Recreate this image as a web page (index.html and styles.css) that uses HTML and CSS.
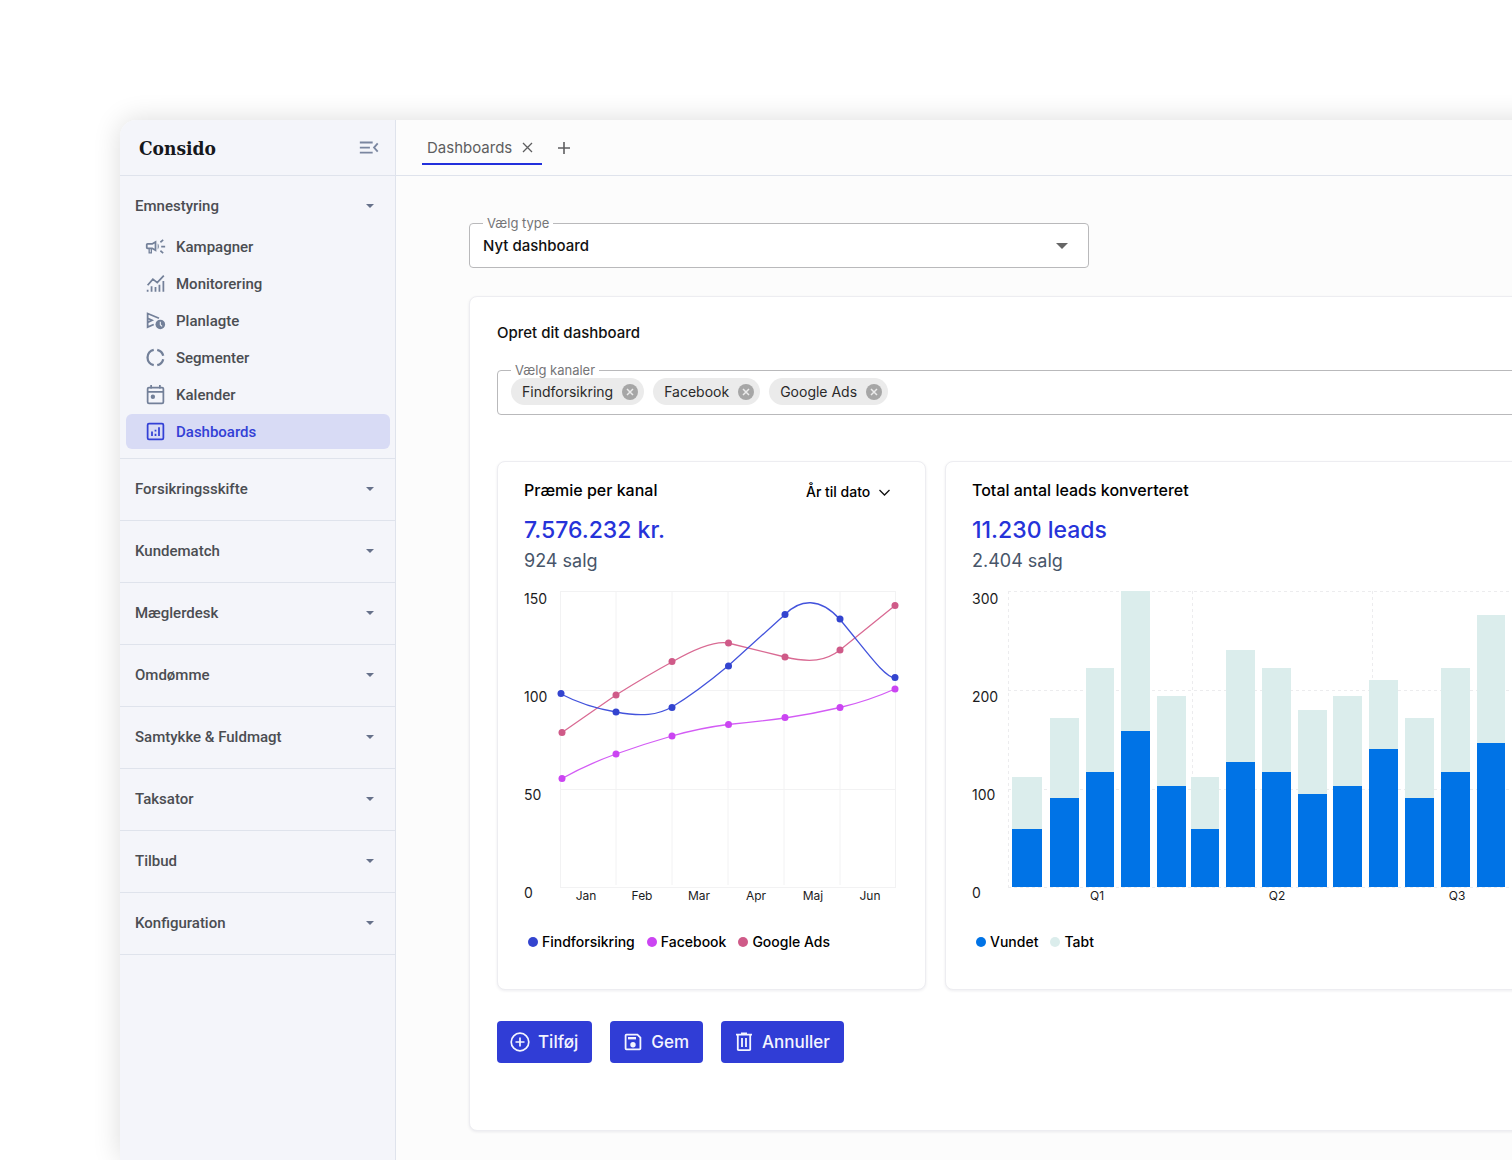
FILE: index.html
```html
<!DOCTYPE html>
<html lang="da">
<head>
<meta charset="utf-8">
<meta name="viewport" content="width=device-width, initial-scale=1">
<title>Consido – Dashboards</title>
<link rel="stylesheet" href="styles.css">
</head>
<body>
<div class="page">
<div class="app">
  <aside class="sidebar">
    <div class="brand">
      <span class="logo">Consido</span>
      <button class="icon-button" type="button" aria-label="Skjul menu">
        <svg width="22" height="22" viewBox="0 0 24 24" fill="none" stroke="currentColor" stroke-width="2"><path d="M2 6h14M2 11.500h11M2 17h14M21.500 7l-4 4.500 4 4.500"/></svg>
      </button>
    </div>
    <nav>
      <section class="group">
        <button class="group-toggle group-toggle-open" type="button">Emnestyring <span class="caret"></span></button>
        <ul class="menu">
          <li><a class="menu-item" href="#kampagner"><svg class="menu-icon" viewBox="0 0 24 24" fill="currentColor"><path d="M18.500 11v2H23v-2zM17 17.600l3.200 2.800 1.200-1.600-3.200-2.800zM21.400 5.200l-1.200-1.600L17 6.400 18.200 8zM3 8c-1.100 0-2 .9-2 2v3c0 1.100.9 2 2 2h1v5h4v-5l5 3V5L8 8H3zm5.500 2L11 8.500v6L8.500 13H3v-3h5.500zM6.500 15v3.500h-1V15zM15.800 12c0-1.300-.4-2.500-1.300-3.300v6.600c.9-.8 1.300-2 1.300-3.300z"/></svg>Kampagner</a></li>
          <li><a class="menu-item" href="#monitorering"><svg class="menu-icon" viewBox="0 0 24 24" fill="none" stroke="currentColor" stroke-width="2"><path d="M3 14l6-7 5 4 7.500-8M3 19v2.500M7.500 15v6.500M12 16v5.500M16.500 13.500v8M21 9v12.500"/></svg>Monitorering</a></li>
          <li><a class="menu-item" href="#planlagte"><svg class="menu-icon" viewBox="0 0 24 24" fill="none" stroke="currentColor" stroke-width="2"><path d="M16 9.500L3 4v15.500l7-3M3 9.500l5 2.300-5 2.300"/><circle cx="17.500" cy="16.500" r="5.500" fill="currentColor" stroke="none"/><path d="M17.500 13.500v3.300l2 2" stroke="#f4f5fa" stroke-width="1.200"/></svg>Planlagte</a></li>
          <li><a class="menu-item" href="#segmenter"><svg class="menu-icon" viewBox="0 0 24 24" fill="none" stroke="currentColor" stroke-width="2.600"><path d="M10 3.200a9 9 0 0 0 0 17.600M14 3.200a9 9 0 0 1 6.800 6.800M20.800 14a9 9 0 0 1-6.800 6.800"/></svg>Segmenter</a></li>
          <li><a class="menu-item" href="#kalender"><svg class="menu-icon" viewBox="0 0 24 24" fill="none" stroke="currentColor" stroke-width="2"><rect x="3" y="4" width="18" height="18" rx="1.500"/><path d="M3 9h18M7 1v4M17 1v4"/><circle cx="9" cy="14.500" r="2.500" fill="currentColor" stroke="none"/></svg>Kalender</a></li>
          <li><a class="menu-item menu-item-active" href="#dashboards" aria-current="page"><svg class="menu-icon" viewBox="0 0 24 24" fill="none" stroke="currentColor" stroke-width="2"><rect x="3" y="3" width="18" height="18" rx="1.500"/><path d="M8 12v5M12 10v2M12 14.500V17M16 7v10"/></svg>Dashboards</a></li>
        </ul>
      </section>
      <button class="group-toggle" type="button">Forsikringsskifte <span class="caret"></span></button>
      <button class="group-toggle" type="button">Kundematch <span class="caret"></span></button>
      <button class="group-toggle" type="button">Mæglerdesk <span class="caret"></span></button>
      <button class="group-toggle" type="button">Omdømme <span class="caret"></span></button>
      <button class="group-toggle" type="button">Samtykke &amp; Fuldmagt <span class="caret"></span></button>
      <button class="group-toggle" type="button">Taksator <span class="caret"></span></button>
      <button class="group-toggle" type="button">Tilbud <span class="caret"></span></button>
      <button class="group-toggle" type="button">Konfiguration <span class="caret"></span></button>
    </nav>
  </aside>

  <div class="workspace">
    <header class="tabs">
      <div class="tab">
        <a class="tab-link" href="#dashboards">Dashboards</a>
        <button class="icon-button" type="button" aria-label="Luk fane"><svg width="11" height="11" viewBox="0 0 11 11" stroke="currentColor" stroke-width="1.300"><path d="M1 1l9 9M10 1l-9 9"/></svg></button>
      </div>
      <button class="icon-button tab-add" type="button" aria-label="Ny fane"><svg width="12" height="12" viewBox="0 0 12 12" stroke="currentColor" stroke-width="1.600"><path d="M6 0v12M0 6h12"/></svg></button>
    </header>

    <main class="content">
      <fieldset class="field field-type">
        <legend><label for="type">Vælg type</label></legend>
        <div class="select-wrap">
          <select class="type-select" id="type"><option>Nyt dashboard</option></select>
          <span class="caret caret-large"></span>
        </div>
      </fieldset>

      <section class="panel">
        <h1 class="heading">Opret dit dashboard</h1>
        <fieldset class="field field-channels">
          <legend>Vælg kanaler</legend>
          <ul class="chips">
            <li class="chip">Findforsikring <button class="icon-button chip-remove" type="button" aria-label="Fjern Findforsikring"><svg width="16" height="16" viewBox="0 0 16 16"><circle cx="8" cy="8" r="8" fill="#a6a6a6"/><path d="M5 5l6 6M11 5l-6 6" stroke="#ebebeb" stroke-width="1.500"/></svg></button></li>
            <li class="chip">Facebook <button class="icon-button chip-remove" type="button" aria-label="Fjern Facebook"><svg width="16" height="16" viewBox="0 0 16 16"><circle cx="8" cy="8" r="8" fill="#a6a6a6"/><path d="M5 5l6 6M11 5l-6 6" stroke="#ebebeb" stroke-width="1.500"/></svg></button></li>
            <li class="chip">Google Ads <button class="icon-button chip-remove" type="button" aria-label="Fjern Google Ads"><svg width="16" height="16" viewBox="0 0 16 16"><circle cx="8" cy="8" r="8" fill="#a6a6a6"/><path d="M5 5l6 6M11 5l-6 6" stroke="#ebebeb" stroke-width="1.500"/></svg></button></li>
          </ul>
        </fieldset>

        <div class="cards">
          <article class="card">
            <div class="card-head">
              <h2 class="heading card-title">Præmie per kanal</h2>
              <div class="period-wrap">
                <select class="period" aria-label="Periode"><option>År til dato</option></select>
                <svg class="period-chevron" width="11" height="7" viewBox="0 0 11 7" fill="none" stroke="currentColor" stroke-width="1.300"><path d="M.5 1l5 5 5-5"/></svg>
              </div>
            </div>
            <p class="value">7.576.232 kr.</p>
            <p class="sub">924 salg</p>
            <svg class="chart" width="374" height="320" viewBox="0 0 374 320" role="img" aria-label="Præmie per kanal, januar til juni">
              <g class="grid">
                <path d="M36 6.500H372M36 105.500H372M36 204.500H372M36 302.500H372"/>
                <path d="M36.500 6v296M92 6v294M148 6v294M204 6v294M260 6v294M316 6v294M371.500 6v296"/>
              </g>
              <g class="axis"><text x="0" y="19">150</text><text x="0" y="117">100</text><text x="0" y="215">50</text><text x="0" y="313">0</text></g>
              <g class="axis axis-x"><text x="62" y="315">Jan</text><text x="118" y="315">Feb</text><text x="175" y="315">Mar</text><text x="232" y="315">Apr</text><text x="289" y="315">Maj</text><text x="346" y="315">Jun</text></g>
              <g class="series series-google">
                <path d="M38 147.500L92 110Q124 90 148 77C174 62 192 56 204 58L261 72C286 78 302 76 316 65L371 20.500"/>
                <circle cx="38" cy="147.500" r="3.500"/><circle cx="92" cy="110" r="3.500"/><circle cx="148" cy="76.500" r="3.500"/><circle cx="204.500" cy="58" r="3.500"/><circle cx="261" cy="72" r="3.500"/><circle cx="316" cy="65" r="3.500"/><circle cx="371" cy="20.500" r="3.500"/>
              </g>
              <g class="series series-find">
                <path d="M37 109C56 119 74 124 92 127C118 132 134 130 148 122C168 110 186 96 204 81L261 29.500C276 14 296 12 316 34.500C344 68 360 92 371 93"/>
                <circle cx="37" cy="108.500" r="3.500"/><circle cx="92" cy="127" r="3.500"/><circle cx="148" cy="122.500" r="3.500"/><circle cx="204.500" cy="81" r="3.500"/><circle cx="261" cy="29.500" r="3.500"/><circle cx="316" cy="34" r="3.500"/><circle cx="371" cy="92.500" r="3.500"/>
              </g>
              <g class="series series-face">
                <path d="M38 193.500Q64 179 92 169T148 151T204 139.500Q232 137 261 133Q288 129 316 122.500Q344 116 371 104"/>
                <circle cx="38" cy="193.500" r="3.500"/><circle cx="92" cy="169" r="3.500"/><circle cx="148" cy="151" r="3.500"/><circle cx="204.500" cy="139.500" r="3.500"/><circle cx="261" cy="132.500" r="3.500"/><circle cx="316" cy="122.500" r="3.500"/><circle cx="371" cy="104" r="3.500"/>
              </g>
            </svg>
            <ul class="legend">
              <li class="key key-find">Findforsikring</li>
              <li class="key key-face">Facebook</li>
              <li class="key key-google">Google Ads</li>
            </ul>
          </article>

          <article class="card">
            <div class="card-head">
              <h2 class="heading card-title">Total antal leads konverteret</h2>
            </div>
            <p class="value">11.230 leads</p>
            <p class="sub">2.404 salg</p>
            <svg class="chart" width="580" height="320" viewBox="0 0 580 320" role="img" aria-label="Vundne og tabte leads per kvartal">
              <g class="grid grid-dashed">
                <path d="M36 6.500H580M36 105.500H580M36 204.500H580M36 302.500H580"/>
                <path d="M36.500 6v296M220.500 6v296M400.500 6v296"/>
              </g>
              <g class="axis"><text x="0" y="19">300</text><text x="0" y="117">200</text><text x="0" y="215">100</text><text x="0" y="313">0</text></g>
              <g class="axis axis-x"><text x="125" y="315">Q1</text><text x="305" y="315">Q2</text><text x="485" y="315">Q3</text></g>
              <path class="bars-lost" d="M40 192h30v52h-30zM78 133h29v80h-29zM114 83h28v104h-28zM149 6h29v140h-29zM185 111h29v90h-29zM219 192h28v52h-28zM254 65h29v112h-29zM290 83h29v104h-29zM326 125h29v84h-29zM361 111h29v90h-29zM397 95h29v69h-29zM433 133h29v80h-29zM469 83h29v104h-29zM505 30h28v128h-28z"/>
              <path class="bars-won" d="M40 244h30v58h-30zM78 213h29v89h-29zM114 187h28v115h-28zM149 146h29v156h-29zM185 201h29v101h-29zM219 244h28v58h-28zM254 177h29v125h-29zM290 187h29v115h-29zM326 209h29v93h-29zM361 201h29v101h-29zM397 164h29v138h-29zM433 213h29v89h-29zM469 187h29v115h-29zM505 158h28v144h-28z"/>
            </svg>
            <ul class="legend">
              <li class="key key-won">Vundet</li>
              <li class="key key-lost">Tabt</li>
            </ul>
          </article>
        </div>

        <div class="actions">
          <button class="button" type="button"><svg width="20" height="20" viewBox="0 0 20 20" fill="none" stroke="currentColor" stroke-width="1.700"><circle cx="10" cy="10" r="8.800"/><path d="M10 5.500v9M5.500 10h9"/></svg>Tilføj</button>
          <button class="button" type="button"><svg width="20" height="20" viewBox="0 0 20 20" fill="none" stroke="currentColor" stroke-width="1.800"><path d="M3.400 2.600h11l3 3v11a.8.8 0 0 1-.8.8H3.400a.8.8 0 0 1-.8-.8V3.400a.8.8 0 0 1 .8-.8z"/><path d="M5 6.200h8" stroke-width="2.400"/><circle cx="10" cy="12.700" r="2.700" fill="currentColor" stroke="none"/></svg>Gem</button>
          <button class="button" type="button"><svg width="20" height="20" viewBox="0 0 20 20" fill="none" stroke="currentColor" stroke-width="1.800"><path d="M2 2.700h16M7 1.500h6M3.800 3v14.400a.8.8 0 0 0 .8.800h10.800a.8.8 0 0 0 .8-.8V3M8 6v9M12 6v9"/></svg>Annuller</button>
        </div>
      </section>
    </main>
  </div>
</div>
</div>
</body>
</html>
```
FILE: styles.css
```css
* { box-sizing: border-box; }

body {
  margin: 0;
  background: #fff;
  color: #111;
  font-family: Inter, "Liberation Sans", sans-serif;
  font-size: 15px;
}

button, select { font: inherit; color: inherit; }
ul, p, h1, h2 { margin: 0; padding: 0; }
ul { list-style: none; }
svg { display: block; flex: none; }

.page {
  min-height: 100vh;
  padding: 120px 0 0 120px;
  overflow: hidden;
  display: flex;
}

/* The window runs on past the right edge of the page */
.app {
  flex: 1 0 100%;
  display: flex;
  margin-right: -120px;
  border-top-left-radius: 16px;
  background: #fcfcfc;
  box-shadow: 0 0 28px rgba(0, 0, 0, 0.14);
}

.icon-button {
  display: flex;
  padding: 0;
  border: 0;
  background: none;
  cursor: pointer;
}

.caret {
  border: 4px solid transparent;
  border-top-color: #66718a;
  border-bottom: 0;
}

.caret-large {
  border-width: 6px;
  border-bottom: 0;
  border-top-color: #666;
}

/* Sidebar */
.sidebar {
  flex: none;
  width: 276px;
  border-right: 1px solid #dfe3ec;
  border-top-left-radius: 16px;
  background: #f4f5fa;
  color: #4b4d52;
  font-family: Roboto, "Liberation Sans", sans-serif;
  font-weight: 500;
}

.brand {
  display: flex;
  align-items: center;
  justify-content: space-between;
  height: 56px;
  padding: 0 15px 0 19px;
  border-bottom: 1px solid #dfe3ec;
  color: #7a86a0;
}

.logo {
  color: #16181c;
  font-family: "DejaVu Serif Condensed", "DejaVu Serif", serif;
  font-size: 19px;
  font-weight: 700;
}

.group { border-bottom: 1px solid #dfe3ec; padding: 6px 0 9px; }

.group-toggle {
  display: flex;
  align-items: center;
  justify-content: space-between;
  width: 100%;
  height: 62px;
  padding: 0 21px 2px 15px;
  border: 0;
  border-bottom: 1px solid #dfe3ec;
  background: none;
  text-align: left;
}

.group-toggle-open { height: 47px; padding-bottom: 0; border-bottom: 0; }

.menu {
  display: flex;
  flex-direction: column;
  gap: 2px;
  padding: 0 5px 0 6px;
}

.menu-item {
  display: flex;
  align-items: center;
  gap: 10px;
  height: 35px;
  padding-left: 19px;
  border-radius: 6px;
  color: inherit;
  text-decoration: none;
}

.menu-icon { width: 21px; height: 21px; color: #738099; }
.menu-item-active { background: #d8dbf5; color: #3340d6; }
.menu-item-active .menu-icon { color: inherit; }

/* Workspace */
.workspace { flex: 1; min-width: 0; }

.tabs {
  display: flex;
  align-items: flex-end;
  gap: 16px;
  height: 56px;
  padding: 0 26px 10px;
  border-bottom: 1px solid #dfe3ec;
  color: #5e5e60;
}

.tab {
  display: flex;
  align-items: center;
  gap: 10px;
  height: 33px;
  padding: 0 9px 0 5px;
  border-bottom: 2px solid #2230dc;
}

.tab-link { color: inherit; text-decoration: none; }
.tab-add { height: 33px; align-items: center; padding-bottom: 2px; }

.content { padding: 39px 40px 29px 73px; }

/* Outlined fields */
.field {
  min-width: 0;
  margin: 0;
  padding: 0;
  border: 1px solid #b9b9bb;
  border-radius: 4px;
  background: #fff;
}

.field legend {
  margin-left: 13px;
  padding: 0 4px;
  color: #757577;
  font-size: 13px;
  line-height: 16px;
}

.field-type { max-width: 620px; }

.select-wrap { display: grid; align-items: center; padding-bottom: 7px; }

.type-select {
  grid-area: 1 / 1;
  width: 100%;
  height: 29px;
  padding: 0 13px;
  border: 0;
  background: none;
  appearance: none;
  font-weight: 500;
}

.select-wrap .caret { grid-area: 1 / 1; justify-self: end; margin-right: 20px; pointer-events: none; }

.panel {
  margin-top: 28px;
  padding: 25px 27px 67px;
  border: 1px solid #ededf1;
  border-radius: 8px;
  background: #fff;
  box-shadow: 0 1px 3px rgba(20, 20, 60, 0.08);
}

.heading { font-size: 15px; font-weight: 500; line-height: 22px; }

.field-channels { margin-top: 18px; }

.chips { display: flex; gap: 9px; padding: 0 13px 9px; }

.chip {
  display: flex;
  align-items: center;
  gap: 9px;
  height: 27px;
  padding: 0 6px 0 11px;
  border-radius: 14px;
  background: #ebebeb;
  color: #2a2a2a;
  font-size: 14px;
}

/* Cards */
.cards {
  display: grid;
  grid-template-columns: 429px minmax(0, 1fr);
  gap: 19px;
  margin-top: 46px;
}

.card {
  padding: 17px 27px 37px 26px;
  border: 1px solid #ededf1;
  border-radius: 8px;
  background: #fff;
  box-shadow: 0 1px 3px rgba(20, 20, 60, 0.08);
  overflow: hidden;
}

.card-head { display: flex; justify-content: space-between; }
.card-title { color: #000; font-size: 16px; }

.period-wrap { display: grid; align-items: end; margin-right: 8px; }

.period {
  grid-area: 1 / 1;
  height: 22px;
  padding: 3px 19px 0 0;
  border: 0;
  background: none;
  appearance: none;
  color: #000;
  font-size: 14px;
  font-weight: 500;
  line-height: 19px;
}

.period-chevron { grid-area: 1 / 1; justify-self: end; margin-bottom: 5px; pointer-events: none; }

.value {
  margin-top: 11px;
  color: #2633d9;
  font-size: 23px;
  font-weight: 500;
  line-height: 36px;
}

.sub { color: #475569; font-size: 18px; line-height: 26px; }

.chart { margin-top: 11px; overflow: visible; }

.grid { fill: none; stroke: #f2f2f3; stroke-width: 1; }
.grid-dashed { stroke: #ececee; stroke-dasharray: 3 3; }
.axis { fill: #1c1c1e; font-size: 14px; }
.axis-x { font-size: 12px; text-anchor: middle; }

.series path { fill: none; stroke-width: 1.3px; }
.series-find { stroke: #4353dc; }
.series-find circle { fill: #3344cf; stroke: none; }
.series-face { stroke: #d35cf5; }
.series-face circle { fill: #cb45f2; stroke: none; }
.series-google { stroke: #d96a93; }
.series-google circle { fill: #cf5a88; stroke: none; }

.bars-lost { fill: #dbedec; }
.bars-won { fill: #0073e6; }

.legend {
  display: flex;
  gap: 12px;
  margin-top: 27px;
  padding-left: 4px;
  color: #000;
  font-size: 14px;
  font-weight: 500;
  line-height: 20px;
}

.key { display: flex; align-items: center; gap: 4px; }

.key::before {
  content: "";
  width: 10px;
  height: 10px;
  border-radius: 50%;
  background: currentColor;
}

.key-find::before { background: #3344cf; }
.key-face::before { background: #cb45f2; }
.key-google::before { background: #cf5a88; }
.key-won::before { background: #0073e6; }
.key-lost::before { background: #dbedec; }

/* Actions */
.actions { display: flex; gap: 18px; margin-top: 31px; }

.button {
  display: flex;
  align-items: center;
  gap: 8px;
  height: 42px;
  padding: 0 14px 0 13px;
  border: 0;
  border-radius: 4px;
  background: #303dd6;
  color: #f4f5ff;
  font-size: 17px;
  font-weight: 500;
  cursor: pointer;
}
```
